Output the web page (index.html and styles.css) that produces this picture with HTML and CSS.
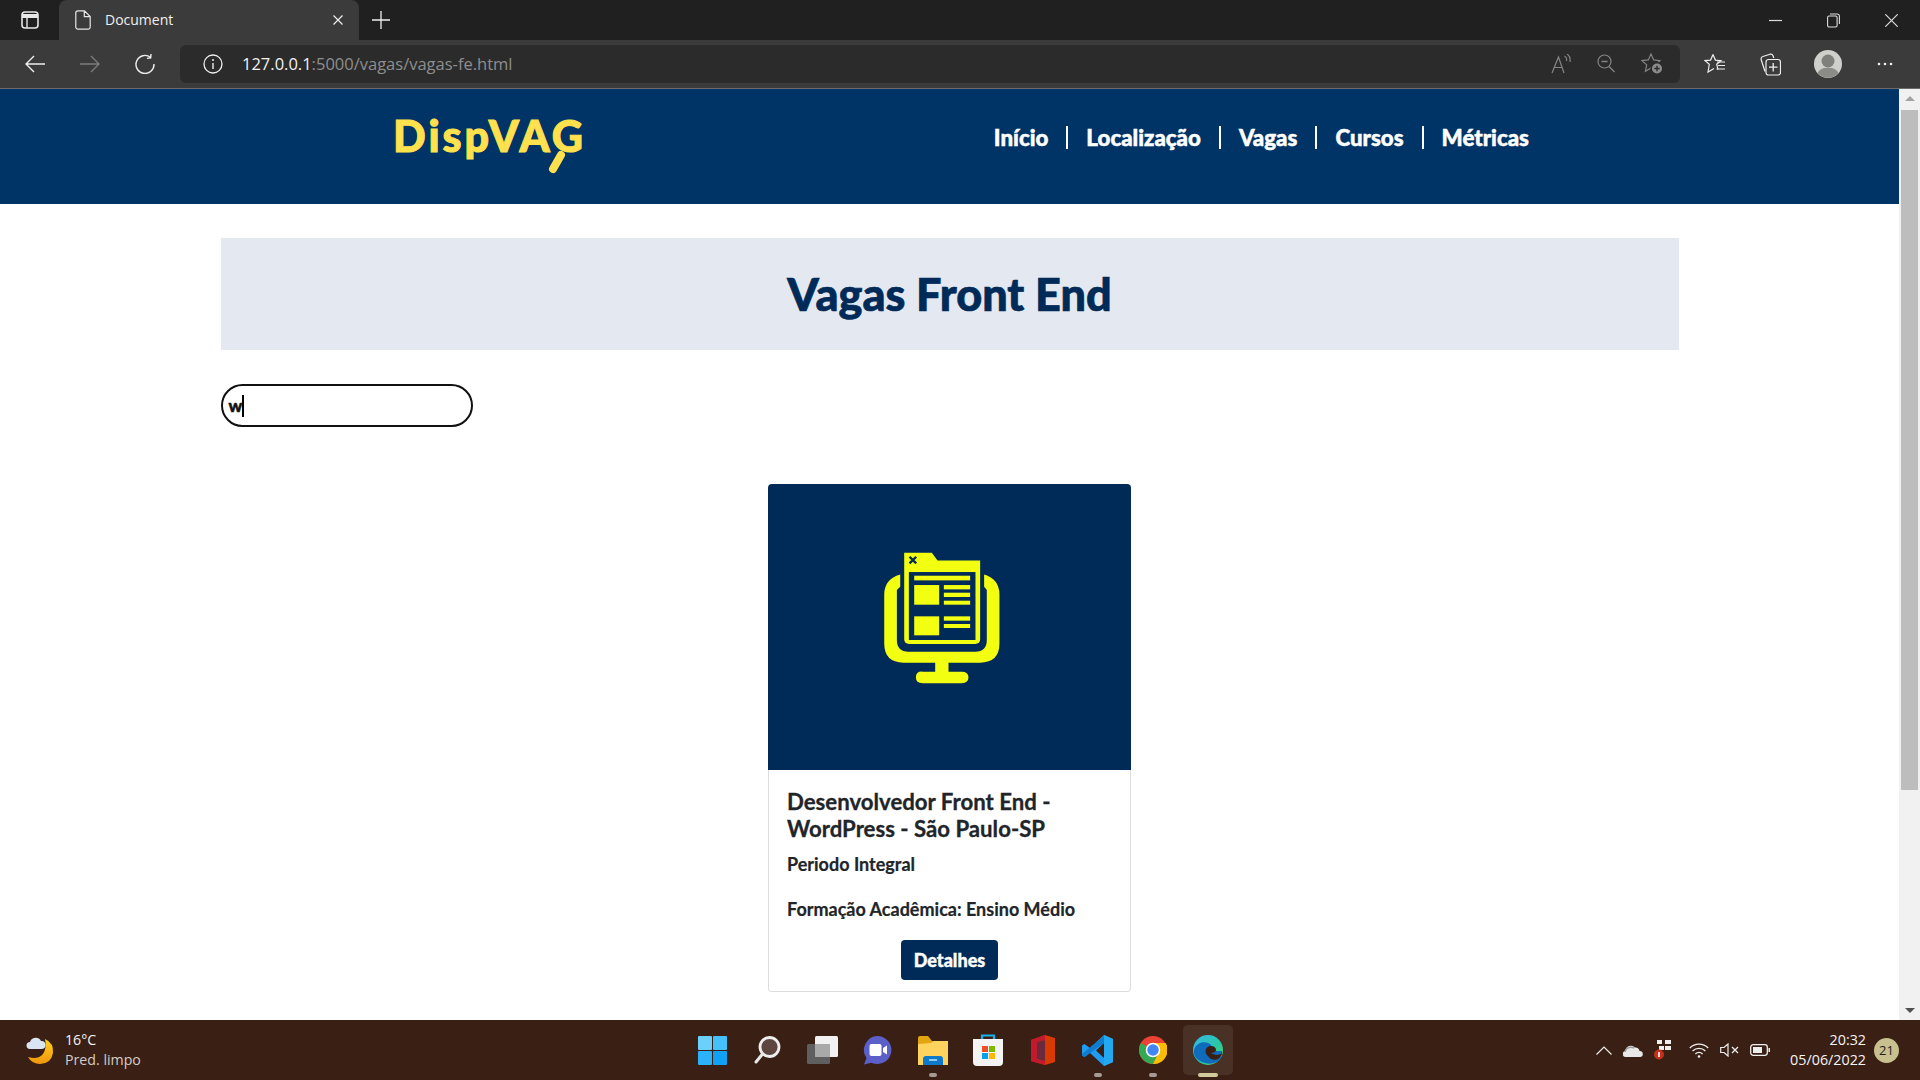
FILE: index.html
```html
<html>
<head>
  <meta charset="utf-8">
  <title>Document</title>
  <link rel="stylesheet" href="styles.css">
</head>
<body>
  <div class="tabstrip">
    <svg class="ico sidebar-ico" width="18" height="18" viewBox="0 0 18 18"><rect x="1" y="1" width="16" height="16" rx="3" fill="none" stroke="#e8e8e8" stroke-width="1.6"/><path d="M1 5h16" stroke="#e8e8e8" stroke-width="4"/><path d="M6 6v11" stroke="#e8e8e8" stroke-width="1.4"/></svg>
    <div class="tab">
      <svg class="ico" width="16" height="20" viewBox="0 0 16 20"><path d="M3 .8h6.500l5.700 5.700V17a2.200 2.200 0 0 1-2.200 2.200H3A2.200 2.200 0 0 1 .8 17V3A2.200 2.200 0 0 1 3 .8zM9.300 1v5.700h5.700" fill="none" stroke="#e6e6e6" stroke-width="1.200"/></svg>
      <span class="tab-title">Document</span>
      <svg class="ico tab-close" width="10" height="10" viewBox="0 0 10 10"><path d="M.5.500l9 9M9.500.5l-9 9" stroke="#eee" stroke-width="1.200"/></svg>
    </div>
    <svg class="ico tab-plus" width="18" height="18" viewBox="0 0 18 18"><path d="M9 0v18M0 9h18" stroke="#eee" stroke-width="1.300"/></svg>
    <div class="win-controls">
      <svg class="ico" width="13" height="13" viewBox="0 0 13 13"><path d="M0 6.500h13" stroke="#ddd" stroke-width="1.200"/></svg>
      <svg class="ico" width="13" height="15" viewBox="0 0 13 15"><rect x=".6" y="3" width="9.500" height="11" rx="1.500" fill="none" stroke="#ddd" stroke-width="1.100"/><path d="M3 1h7.500A2 2 0 0 1 12.400 3v8" fill="none" stroke="#ddd" stroke-width="1.100"/></svg>
      <svg class="ico" width="13" height="13" viewBox="0 0 13 13"><path d="M.3.300l12.400 12.400M12.700.3L.3 12.700" stroke="#ddd" stroke-width="1.200"/></svg>
    </div>
  </div>

  <div class="toolbar">
    <div class="nav-btns">
      <svg class="ico" width="20" height="18" viewBox="0 0 20 18"><path d="M9 1L1 9l8 8M1 9h19" fill="none" stroke="#eee" stroke-width="1.400"/></svg>
      <svg class="ico" width="20" height="18" viewBox="0 0 20 18"><path d="M11 1l8 8-8 8M19 9H0" fill="none" stroke="#7c7c7c" stroke-width="1.400"/></svg>
      <svg class="ico" width="20" height="20" viewBox="0 0 20 20"><path d="M15.500 3.300A9 9 0 1 0 19 10M12 4.400l3.700-.6.300-3.800" fill="none" stroke="#eee" stroke-width="1.400"/></svg>
    </div>
    <div class="addressbar">
      <svg class="ico" width="20" height="20" viewBox="0 0 20 20"><circle cx="10" cy="10" r="9" fill="none" stroke="#eee" stroke-width="1.300"/><path d="M10 9v6" stroke="#eee" stroke-width="1.400"/><circle cx="10" cy="6" r="1" fill="#eee"/></svg>
      <span class="url"><span class="url-host">127.0.0.1</span>:5000/vagas/vagas-fe.html</span>
      <div class="address-actions">
        <svg class="ico" width="20" height="20" viewBox="0 0 20 20"><path d="M1 19L7.500 3 13 19M3.500 13.500h7.500M13.500 2c1.700 1 2.500 3 2 5M16 0c2.500 1.500 3.500 4.500 3 8" fill="none" stroke="#858585" stroke-width="1.200"/></svg>
        <svg class="ico" width="18" height="19" viewBox="0 0 18 19"><circle cx="7.500" cy="7.500" r="6.500" fill="none" stroke="#858585" stroke-width="1.200"/><path d="M12 12.500l5.500 5.500M4.500 7.500h6" stroke="#858585" stroke-width="1.300"/></svg>
        <svg class="ico" width="22" height="21" viewBox="0 0 22 21"><path d="M10 1l2.700 5.900 6.300.7-4.700 4.300 1.300 6.300-5.600-3.200-5.600 3.200 1.300-6.300L1 7.600l6.300-.7z" fill="none" stroke="#858585" stroke-width="1.200"/><circle cx="16" cy="15.500" r="6.500" fill="#2b2b2b"/><circle cx="16" cy="15.500" r="5" fill="#8c8c8c"/><path d="M13.300 15.500h5.400M16 12.800v5.400" stroke="#2b2b2b" stroke-width="1.400"/></svg>
      </div>
    </div>
    <div class="toolbar-right">
      <svg class="ico" width="21" height="21" viewBox="0 0 21 21"><path d="M9 1.500l2.400 5.600 5.600.5-4.300 3.700 1.300 5.400M9 1.500L6.600 7.100 1 7.600l4.300 3.700L4 19l6-3.500" fill="none" stroke="#eee" stroke-width="1.200"/><path d="M13 9h8M14 12.500h7M12.500 16h8.500" stroke="#eee" stroke-width="1.200"/></svg>
      <svg class="ico" width="21" height="24" viewBox="0 0 21 24"><path d="M5 19.500L1.200 7.700a2.500 2.500 0 0 1 1.700-3.200L10 2.200a2.500 2.500 0 0 1 3 1.500l.8 2.300" fill="none" stroke="#eee" stroke-width="1.200"/><rect x="6" y="7.500" width="14.500" height="15.500" rx="2.500" fill="none" stroke="#eee" stroke-width="1.200"/><path d="M13.200 11v8.500M9 15.200h8.500" stroke="#eee" stroke-width="1.300"/></svg>
      <svg class="ico avatar" width="28" height="28" viewBox="0 0 28 28"><circle cx="14" cy="14" r="14" fill="#cfcfcb"/><circle cx="14" cy="11" r="6.500" fill="#7f7f7b"/><path d="M3.500 23a11 7.500 0 0 1 21 0A14 14 0 0 1 3.500 23z" fill="#8b8b87"/></svg>
      <svg class="ico" width="16" height="4" viewBox="0 0 16 4"><circle cx="2" cy="2" r="1.300" fill="#eee"/><circle cx="8" cy="2" r="1.300" fill="#eee"/><circle cx="14" cy="2" r="1.300" fill="#eee"/></svg>
    </div>
  </div>

  <div class="viewport">
    <div class="page">
      <header class="site-header">
        <a class="logo">DispVAG
          <svg class="logo-handle" width="24" height="24" viewBox="0 0 24 24"><path d="M14 5L6 19" stroke="#ffe14d" stroke-width="8" stroke-linecap="round"/></svg>
        </a>
        <ul class="menu">
          <li>Início</li>
          <li>Localização</li>
          <li>Vagas</li>
          <li>Cursos</li>
          <li>Métricas</li>
        </ul>
      </header>

      <main class="container">
        <div class="banner"><h1>Vagas Front End</h1></div>
        <div class="search"><span class="search-text">w</span><span class="caret"></span></div>

        <div class="cards">
          <div class="card">
            <svg class="card-img" width="363" height="286" viewBox="23 12 1090 858">
              <rect x="0" y="0" width="1140" height="900" fill="#002a57"/>
              <path fill="#f3ff10" d="M420 283v37l-10 10v150q0 35 35 35h200q35 0 35-35V330l-8-10v-37q46 14 46 60v147q0 58-58 58h-95v27h40q20 0 20 17t-20 18H487q-20 0-20-18t20-17h38v-27h-95q-58 0-58-58V343q0-46 48-60z"/>
              <path fill="#f3ff10" d="M432 218h83l17 23h128v237q0 14-15 14H447q-15 0-15-14z"/>
              <rect x="446" y="276" width="200" height="204" fill="#002a57"/>
              <g fill="#f3ff10">
                <rect x="462" y="287" width="168" height="14"/>
                <rect x="462" y="315" width="75" height="59"/>
                <rect x="551" y="315" width="79" height="13"/>
                <rect x="551" y="338" width="79" height="13"/>
                <rect x="551" y="362" width="79" height="12"/>
                <rect x="462" y="409" width="75" height="57"/>
                <rect x="551" y="409" width="79" height="13"/>
                <rect x="551" y="432" width="79" height="12"/>
              </g>
              <path d="M448 230l20 20M468 230l-20 20" stroke="#002a57" stroke-width="7"/>
            </svg>
            <div class="card-body">
              <h5>Desenvolvedor Front End - WordPress - São Paulo-SP</h5>
              <p>Periodo Integral</p>
              <p>Formação Acadêmica: Ensino Médio</p>
              <a class="btn">Detalhes</a>
            </div>
          </div>
        </div>
      </main>
    </div>
    <div class="scrollbar">
      <div class="arrow-up"></div>
      <div class="thumb"></div>
      <div class="arrow-down"></div>
    </div>
  </div>

  <div class="taskbar">
    <div class="weather">
      <svg width="30" height="30" viewBox="0 0 30 30"><defs><linearGradient id="moon" x1="0" y1="0" x2="0" y2="1"><stop offset="0" stop-color="#ffd21e"/><stop offset="1" stop-color="#f0960e"/></linearGradient></defs><path d="M20 4q9 4 8 14-2 11-13 11Q7 29 3 22q10 3 15-3 4-6 2-15z" fill="url(#moon)"/><path d="M5 14a3 3 0 0 1 0-7 6 6 0 0 1 11-1 4 4 0 0 1 1 8z" fill="#d9e5f2"/></svg>
      <div class="weather-text">
        <span class="temp">16°C</span>
        <span class="cond">Pred. limpo</span>
      </div>
    </div>

    <div class="taskbar-apps">
      <div class="app">
        <svg width="29" height="29" viewBox="0 0 29 29"><rect width="14" height="14" rx="1" fill="#6bd1fb"/><rect x="15" width="14" height="14" rx="1" fill="#44c0fa"/><rect y="15" width="14" height="14" rx="1" fill="#2bb2f8"/><rect x="15" y="15" width="14" height="14" rx="1" fill="#12a0f5"/></svg>
      </div>
      <div class="app">
        <svg width="27" height="28" viewBox="0 0 27 28"><circle cx="15.500" cy="11" r="9.500" fill="#5d4540" stroke="#eee" stroke-width="2.800"/><path d="M8.500 18L2 26" stroke="#e8e8e8" stroke-width="3" stroke-linecap="round"/></svg>
      </div>
      <div class="app">
        <svg width="31" height="28" viewBox="0 0 31 28"><rect x="0" y="8" width="23" height="20" rx="1.500" fill="#5f5f5f"/><rect x="8" y="0" width="23" height="21" rx="1.500" fill="#f1f1f1"/><rect x="8" y="8" width="15" height="13" fill="#a9a9a9"/></svg>
      </div>
      <div class="app">
        <svg width="29" height="30" viewBox="0 0 29 30"><path d="M14.500 1a14 14 0 1 1-6 26.700L1 29.500 3.500 23A14 14 0 0 1 14.500 1z" fill="#5b5fc7"/><rect x="6.500" y="9" width="12" height="12" rx="2" fill="#fff"/><path d="M20 13l4-2.500v9L20 17z" fill="#fff"/></svg>
      </div>
      <div class="app">
        <svg width="30" height="29" viewBox="0 0 30 29"><path d="M0 2a2 2 0 0 1 2-2h8l4 5h-14z" fill="#e2a40f"/><path d="M0 5h30v24H0z" fill="#e2a40f"/><path d="M0 8l13-1 3-2h14v24H0z" fill="#ffd45e"/><path d="M5 29v-6a3 3 0 0 1 3-3h14a3 3 0 0 1 3 3v6z" fill="#0f79c9"/><path d="M11 24h8" stroke="#bfe3ff" stroke-width="1.500"/></svg>
      </div>
      <div class="app">
        <svg width="30" height="32" viewBox="0 0 30 32"><path d="M9 6V1.500h12V6" fill="none" stroke="#17b0ec" stroke-width="2.200"/><path d="M0 5h30v23a4 4 0 0 1-4 4H4a4 4 0 0 1-4-4z" fill="#f4f4f4"/><rect x="9" y="12" width="6" height="6" fill="#ef4f26"/><rect x="16" y="12" width="6" height="6" fill="#7fba01"/><rect x="9" y="19" width="6" height="6" fill="#01a3ee"/><rect x="16" y="19" width="6" height="6" fill="#ffb901"/></svg>
      </div>
      <div class="app">
        <svg width="24" height="30" viewBox="0 0 24 30"><path d="M14 0l10 3v24l-10 3-14-4V5z" fill="#d83b01"/><path d="M14 0L0 5v21l14 4 0-4-8-2V7l8-2z" fill="#c2192d"/><path d="M6 7l8-2v21l-8-2z" fill="#6b2a3c"/></svg>
      </div>
      <div class="app">
        <svg width="31" height="31" viewBox="0 0 31 31"><path d="M22 0l9 4v23l-9 4L8 18l-5.500 4L0 20.500v-10L2.500 9 8 13zM22 8l-8 7.500 8 7.500z" fill="#1f9cf0" fill-rule="evenodd"/><path d="M22 0l9 4v23l-9 4z" fill="#23a9f2"/><path d="M22 8L8 18l-5.500 4L0 20.500V19l22-18z" fill="#0e7ccf"/></svg>
      </div>
      <div class="app">
        <svg width="28" height="28" viewBox="0 0 28 28"><circle cx="14" cy="14" r="14" fill="#ea4335"/><path d="M14 14L1.900 7A14 14 0 0 0 14 28l7-12z" fill="#34a853"/><path d="M14 7h12.700A14 14 0 0 1 14 28l7-14z" fill="#fbbc04"/><circle cx="14" cy="14" r="6.500" fill="#4285f4" stroke="#fff" stroke-width="1.500"/></svg>
      </div>
      <div class="app app-active">
        <svg width="30" height="30" viewBox="0 0 30 30"><defs><linearGradient id="edge" x1="0" y1="0" x2="1" y2="1"><stop offset="0" stop-color="#36b7e8"/><stop offset=".6" stop-color="#28c8a0"/><stop offset="1" stop-color="#6ed845"/></linearGradient></defs><circle cx="15" cy="15" r="15" fill="url(#edge)"/><path d="M1 15C3 8 10 6 15 8c5 2 5 6 3 8h11q1 7-5 11-6 3-12 1C5 26 0 22 1 15z" fill="#0f6cbd"/><path d="M15 21c-4-3-3-9 2-10 3-.5 6 1 6 4 0 2-2 3-5 3 3 2 8 3 11 0-2 8-10 9-14 3z" fill="#3a1f14"/></svg>
        <span class="app-mark"></span>
      </div>
    </div>

    <div class="tray">
      <svg width="16" height="9" viewBox="0 0 16 9"><path d="M.5 8.500L8 1l7.500 7.500" fill="none" stroke="#eee" stroke-width="1.200"/></svg>
      <svg width="20" height="13" viewBox="0 0 20 13"><path d="M3 13a3 3 0 0 1-.5-6A5.500 5.500 0 0 1 12 3.500 4 4 0 0 1 16.500 7 3 3 0 0 1 17 13z" fill="#e8e8e8"/><path d="M2 8a6 5 0 0 1 9-4" fill="none" stroke="#999" stroke-width="1.500"/></svg>
      <svg width="18" height="22" viewBox="0 0 18 22"><g fill="#eee"><rect x="3" y="1" width="5" height="4"/><rect x="11" y="1" width="6" height="4"/><rect x="11" y="7" width="6" height="4"/><rect x="5" y="7" width="5" height="4"/></g><circle cx="5" cy="15.500" r="5" fill="#c5301c"/><rect x="4" y="13" width="2" height="5" fill="#f5d6cf"/></svg>
      <svg class="wifi" width="20" height="15" viewBox="0 0 20 15"><g fill="none" stroke="#eee" stroke-width="1.300"><path d="M.8 5a13 13 0 0 1 18.400 0M3.600 8a9 9 0 0 1 12.800 0M6.400 11a5 5 0 0 1 7.200 0"/></g><circle cx="10" cy="13.500" r="1.300" fill="#eee"/></svg>
      <svg width="19" height="14" viewBox="0 0 19 14"><path d="M.7 4.500h3.300L8 1v12L4 9.500H.7z" fill="none" stroke="#eee" stroke-width="1.200"/><path d="M12 4l6 6M18 4l-6 6" stroke="#eee" stroke-width="1.300"/></svg>
      <svg width="20" height="12" viewBox="0 0 20 12"><rect x=".7" y=".7" width="16.600" height="10.600" rx="2.500" fill="none" stroke="#eee" stroke-width="1.300"/><rect x="3" y="3" width="9" height="6" fill="#eee"/><rect x="18.500" y="4" width="1.500" height="4" fill="#eee"/></svg>
      <div class="clock">
        <span>20:32</span>
        <span>05/06/2022</span>
      </div>
      <span class="notif">21</span>
    </div>
  </div>
</body>
</html>
```

FILE: styles.css
```css
* {
  box-sizing: border-box;
}

html, body {
  margin: 0;
  height: 100%;
  overflow: hidden;
}

body {
  display: flex;
  flex-direction: column;
  font-family: 'Lato', 'Open Sans', sans-serif;
  background-color: #ffffff;
}

.ico {
  display: block;
  flex: none;
}

/* browser chrome */
.tabstrip {
  display: flex;
  align-items: center;
  height: 40px;
  flex: none;
  background-color: #202020;
}

.sidebar-ico {
  margin-left: 21px;
  margin-right: 20px;
}

.tab {
  display: flex;
  align-items: center;
  align-self: stretch;
  width: 300px;
  padding-left: 16px;
  background-color: #3b3b3b;
  border-radius: 8px 8px 0 0;
}

.tab-title {
  margin-left: 14px;
  margin-bottom: 2px;
  font-family: 'Open Sans', sans-serif;
  font-size: 14px;
  color: #f0f0f0;
}

.tab-close {
  margin-left: auto;
  margin-right: 16px;
}

.tab-plus {
  margin-left: 13px;
}

.win-controls {
  display: flex;
  align-items: center;
  gap: 45px;
  margin-left: auto;
  margin-right: 22px;
}

.toolbar {
  display: flex;
  align-items: center;
  flex: none;
  height: 49px;
  padding-bottom: 1px;
  background-color: #3b3b3b;
  border-bottom: 1px solid #6b6b6b;
}

.nav-btns {
  display: flex;
  align-items: center;
  gap: 35px;
  width: 180px;
  padding-left: 25px;
}

.addressbar {
  display: flex;
  align-items: center;
  width: 1500px;
  height: 38px;
  padding-left: 23px;
  background-color: #2b2b2b;
  border-radius: 6px;
}

.url {
  margin-left: 19px;
  font-family: 'Open Sans', sans-serif;
  font-size: 16.5px;
  color: #8e8e8e;
}

.url-host {
  color: #f2f2f2;
}

.address-actions {
  display: flex;
  align-items: center;
  gap: 26px;
  margin-left: auto;
  margin-right: 17px;
}

.toolbar-right {
  display: flex;
  align-items: center;
  gap: 35px;
  margin-left: 24px;
}

.toolbar-right .avatar {
  margin-left: -2px;
}

/* page */
.viewport {
  display: flex;
  flex: 1;
  min-height: 0;
}

.page {
  flex: 1;
  overflow: hidden;
}

.site-header {
  display: flex;
  align-items: center;
  justify-content: space-between;
  height: 115px;
  padding: 0 352px 17px 393px;
  background-color: #003366;
}

.logo {
  position: relative;
  margin-top: -4px;
  font-family: 'Lato', sans-serif;
  font-weight: 900;
  font-size: 43px;
  line-height: 50px;
  letter-spacing: 3px;
  color: #ffe14d;
  -webkit-text-stroke: 1px #ffe14d;
}

.logo-handle {
  position: absolute;
  right: 15px;
  bottom: -13px;
}

.menu {
  display: flex;
  align-items: center;
  margin: -2px 0 0;
  padding: 0;
  list-style: none;
}

.menu li {
  padding: 0 18px;
  line-height: 23px;
  font-weight: 900;
  font-size: 22.3px;
  color: #ffffff;
  border-left: 2px solid #ffffff;
  -webkit-text-stroke: 0.5px #ffffff;
}

.menu li:first-child {
  border-left: none;
}

.container {
  width: 1458px;
  margin: 34px auto 0;
}

.banner {
  display: flex;
  align-items: center;
  justify-content: center;
  height: 112px;
  background-color: #e4e8f1;
}

.banner h1 {
  margin: 0;
  font-weight: 900;
  font-size: 45px;
  color: #002a57;
  -webkit-text-stroke: 0.7px #002a57;
}

.search {
  display: flex;
  align-items: center;
  width: 252px;
  height: 43px;
  margin-top: 34px;
  padding-left: 6px;
  border: 2.5px solid #111111;
  border-radius: 22px;
}

.search-text {
  font-weight: 900;
  font-size: 17px;
  color: #111111;
  -webkit-text-stroke: 0.5px #111111;
}

.caret {
  width: 2px;
  height: 22px;
  background-color: #000000;
}

.cards {
  display: flex;
  justify-content: center;
  margin-top: 57px;
}

.card {
  width: 363px;
}

.card-img {
  display: block;
  border-radius: 4px 4px 0 0;
}

.card-body {
  display: flex;
  flex-direction: column;
  height: 222px;
  padding: 18px 18px 0;
  background-color: #ffffff;
  border: 1px solid #dddddd;
  border-top: none;
  border-radius: 0 0 4px 4px;
}

.card-body h5 {
  margin: 0;
  font-weight: 700;
  font-size: 22.2px;
  line-height: 27px;
  color: #212529;
  -webkit-text-stroke: 0.3px #212529;
}

.card-body p {
  margin: 9px 0 9px;
  font-weight: 700;
  font-size: 18px;
  line-height: 27px;
  color: #212529;
  -webkit-text-stroke: 0.2px #212529;
}

.btn {
  align-self: center;
  margin-top: 8px;
  padding: 0 13px;
  line-height: 40px;
  font-weight: 900;
  font-size: 18px;
  color: #ffffff;
  background-color: #002a57;
  border-radius: 4px;
  -webkit-text-stroke: 0.4px #ffffff;
}

.scrollbar {
  display: flex;
  flex-direction: column;
  align-items: center;
  width: 21px;
  flex: none;
  background-color: #f1f1f1;
}

.arrow-up {
  width: 0;
  height: 0;
  margin-top: 7px;
  border-left: 5px solid transparent;
  border-right: 5px solid transparent;
  border-bottom: 5px solid #a3a3a3;
}

.thumb {
  width: 17px;
  height: 680px;
  margin-top: 9px;
  background-color: #bdbdbd;
}

.arrow-down {
  width: 0;
  height: 0;
  margin-top: auto;
  margin-bottom: 7px;
  border-left: 5px solid transparent;
  border-right: 5px solid transparent;
  border-top: 5px solid #505050;
}

/* taskbar */
.taskbar {
  display: grid;
  grid-template-columns: 1fr auto 1fr;
  align-items: center;
  flex: none;
  height: 60px;
  font-family: 'Open Sans', sans-serif;
  color: #f4f4f4;
  background-color: #3a1f14;
}

.weather {
  display: flex;
  align-items: center;
  gap: 10px;
  padding-left: 25px;
}

.weather-text {
  display: flex;
  flex-direction: column;
  font-size: 14.2px;
  line-height: 20px;
}

.cond {
  color: #d2cdc9;
}

.taskbar-apps {
  display: flex;
}

.app {
  position: relative;
  display: flex;
  align-items: center;
  justify-content: center;
  width: 55px;
  height: 50px;
}

.app:nth-child(5)::after,
.app:nth-child(8)::after,
.app:nth-child(9)::after {
  content: "";
  position: absolute;
  bottom: -2px;
  left: 24px;
  width: 8px;
  height: 4px;
  border-radius: 2px;
  background-color: #a59a94;
}

.app-active {
  width: 50px;
  margin: 0 2.5px;
  background-color: #4a3126;
  border-radius: 5px;
}

.app-mark {
  position: absolute;
  bottom: -2px;
  left: 15px;
  width: 20px;
  height: 4px;
  border-radius: 2px;
  background-color: #d2cb9c;
}

.tray {
  display: flex;
  align-items: center;
  justify-content: flex-end;
  gap: 11px;
  padding-right: 21px;
}

.tray .wifi {
  margin-left: 6px;
}

.clock {
  display: flex;
  flex-direction: column;
  align-items: flex-end;
  margin-left: 9px;
  font-size: 14.3px;
  line-height: 20px;
}

.notif {
  display: flex;
  align-items: center;
  justify-content: center;
  width: 25px;
  height: 25px;
  margin-left: -3px;
  font-size: 13px;
  color: #222222;
  background-color: #c8c08f;
  border-radius: 50%;
}
```
